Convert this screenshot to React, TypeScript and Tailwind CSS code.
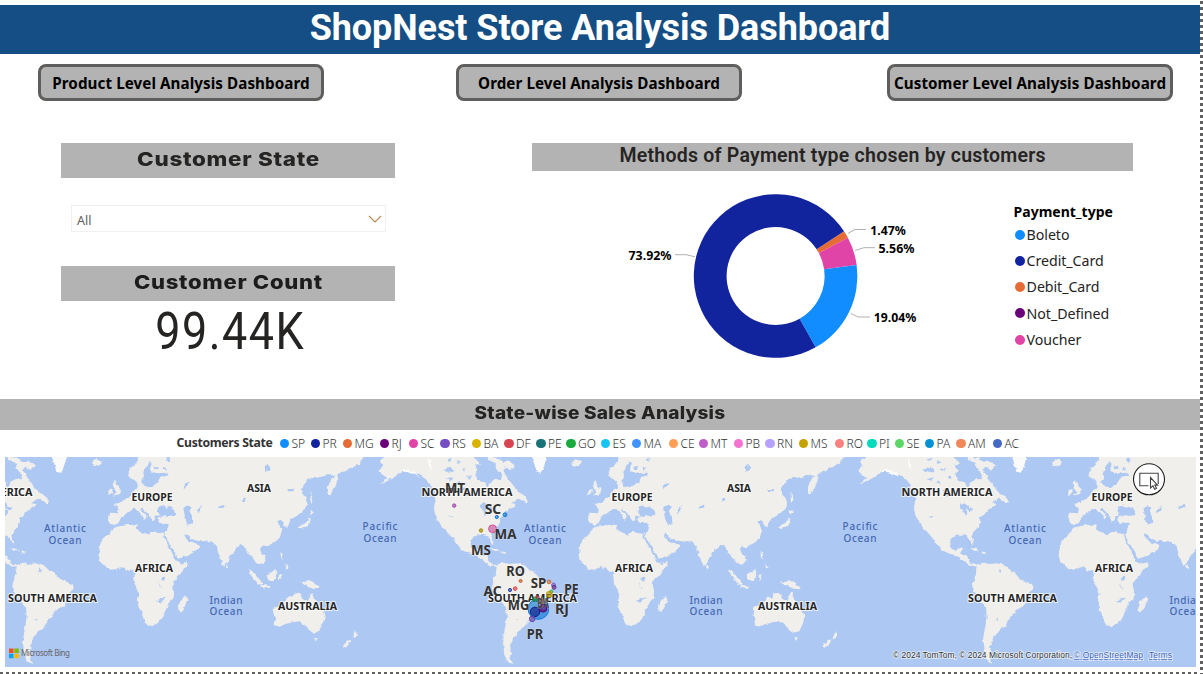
import React from "react";

const land = {
  eurasia:
    "M326 222L330 218 354 220 356 208 350 198 340 192 352 190 362 188 372 180 386 170 394 160 400 150 410 146 414 138 410 126 400 118 390 112 386 98 392 84 404 74 414 60 422 40 1100 40 1094 52 1082 60 1080 72 1066 78 1050 84 1036 94 1020 98 1012 104 1014 118 1006 140 990 166 984 160 984 140 992 120 1006 106 980 106 960 112 926 116 916 128 902 150 906 160 916 172 922 190 916 208 890 228 870 238 866 252 862 262 854 258 850 246 842 240 832 244 842 262 845 274 840 292 828 304 810 314 800 322 786 318 780 326 784 338 794 348 797 362 790 372 778 374 768 368 760 356 748 344 740 330 730 318 722 312 712 320 698 338 690 350 680 368 672 378 666 370 660 352 654 336 650 318 640 312 634 304 610 304 590 302 572 296 564 286 556 280 552 286 562 300 568 308 584 308 598 316 596 324 582 336 566 346 548 352 534 356 526 340 512 316 496 292 494 282 500 276 504 262 506 250 500 248 480 250 472 240 474 232 484 230 478 226 466 228 464 240 458 244 450 232 440 218 428 206 420 208 432 218 440 230 434 240 428 228 418 216 408 206 398 208 388 216 374 222 362 236 356 248 344 254 330 252 324 238Z",
  africa:
    "M346 262L372 256 400 254 410 256 408 268 416 274 430 278 445 284 450 276 462 276 478 280 492 282 490 290 500 308 512 330 522 350 530 366 545 372 563 366 562 376 550 392 535 408 520 424 518 436 522 450 521 474 505 490 500 505 494 520 485 538 470 552 455 558 440 556 434 548 428 528 416 500 413 485 418 462 412 444 402 430 400 412 404 398 396 392 386 392 376 384 362 382 344 388 328 390 314 376 300 362 296 346 298 332 300 315 308 298 322 288 332 274Z",
  northAmerica:
    "M1135 94L1148 78 1140 64 1154 54 1162 40 1424 40 1420 51 1430 60 1440 70 1426 78 1432 90 1446 98 1450 108 1466 116 1504 118 1506 102 1492 90 1506 90 1518 102 1524 118 1535 130 1545 144 1555 156 1572 166 1584 184 1580 190 1560 176 1550 178 1534 190 1550 192 1542 202 1526 208 1512 224 1500 232 1500 246 1492 264 1480 276 1474 290 1480 306 1479 318 1472 302 1462 288 1440 284 1422 290 1410 304 1414 322 1426 334 1434 326 1450 322 1446 332 1440 340 1450 346 1462 348 1466 362 1480 374 1490 374 1486 380 1470 376 1450 362 1430 348 1405 340 1385 330 1370 310 1354 290 1344 278 1332 266 1322 254 1306 226 1302 200 1306 180 1304 160 1290 132 1276 116 1260 106 1240 96 1220 92 1200 98 1188 108 1164 122 1136 134 1162 114 1150 106Z",
  southAmerica:
    "M1490 374L1510 368 1530 372 1550 370 1572 374 1590 390 1604 398 1620 416 1640 426 1658 432 1660 444 1650 458 1640 470 1636 490 1628 500 1608 510 1596 526 1584 544 1574 560 1558 572 1550 582 1540 592 1536 604 1530 620 1534 638 1528 652 1540 672 1525 666 1514 650 1510 620 1510 590 1516 560 1520 530 1518 500 1500 482 1486 460 1476 442 1482 418 1488 400Z",
  australia:
    "M818 510L820 500 840 496 855 484 865 470 878 474 880 462 896 458 906 464 904 474 918 484 926 480 928 462 934 456 942 478 956 492 968 512 974 530 968 552 958 574 938 578 924 568 916 556 900 544 880 546 856 552 838 560 824 556 826 540Z",
  islands:
    "M558 466L562 480 554 500 546 516 536 512 534 498 540 484 550 478ZM940 592L954 592 948 602ZM1064 572L1073 582 1066 596 1058 594 1062 586ZM1054 598L1050 610 1036 623 1028 618 1042 604ZM900 424L916 426 926 420 944 428 958 440 962 447 936 446 924 440 912 434ZM800 404L816 396 826 386 832 396 826 412 818 424 804 420ZM744 386L760 398 776 416 788 432 780 434 764 420 750 402ZM782 434L808 438 806 444 782 440ZM836 404L848 402 842 408 848 420 842 414 838 424ZM842 332L850 346 847 360 842 348ZM856 370L866 382 858 386ZM926 232L931 246 924 258 906 264 890 264 906 254 920 246ZM928 210L942 216 932 226ZM932 156L937 170 936 190 932 182ZM680 372L687 380 683 388 678 382ZM346 120L354 138 364 152 360 162 338 167 350 156 342 146 338 132ZM326 150L338 147 336 160 324 165ZM276 66L292 58 306 66 296 77 280 78ZM1470 324L1488 326 1500 334 1482 332ZM1506 334L1520 338 1514 342 1504 340ZM1462 40L1478 52 1496 54 1508 66 1528 62 1546 78 1532 90 1516 80 1504 94 1490 86 1486 68 1464 60Z",
};

const waters =
  "M472 214L476 200 490 196 500 204 510 200 524 212 526 224 510 228 496 226 484 230ZM550 204L562 196 576 200 570 212 576 232 577 250 564 254 556 238ZM446 142L430 136 424 124 432 112 430 96 440 76 450 62 456 70 450 84 452 94 470 100 500 98 506 106 484 110 478 122 462 136ZM460 80L474 78 476 86 464 88ZM488 80L498 84 496 92 490 90ZM504 52L512 58 506 66 498 58ZM794 80L802 72 812 84 806 94 800 88 796 96ZM548 138L562 126 566 132 552 148ZM590 212L606 196 600 212 592 220ZM654 200L672 194 674 202 658 206ZM726 176L734 170 736 184 728 186ZM758 152L780 134 786 138 766 158ZM862 148L882 146 880 154 864 154ZM486 412L496 410 494 422 484 420ZM476 424L482 440 488 446 484 446 478 436ZM468 482L484 476 500 472 480 488ZM1426 102L1440 80 1454 76 1470 86 1486 94 1496 106 1480 120 1470 132 1462 146 1456 128 1434 122ZM1440 194L1456 190 1466 200 1478 204 1472 214 1456 204 1462 216 1454 230 1450 210 1440 202ZM1346 230L1360 228 1354 234ZM1330 90L1350 80 1364 92 1346 98ZM1340 118L1360 112 1354 124ZM1366 130L1378 124 1382 132ZM1390 146L1400 142 1408 164 1402 172ZM1368 60L1386 66 1372 72ZM1340 58L1358 54 1350 66ZM1556 384L1562 390 1564 398 1558 396ZM1546 538L1554 538 1550 542ZM900 500L910 498 906 503ZM1378 88L1398 84 1390 94ZM1400 110L1416 106 1412 118Z";

const tiles = [-480, 0, 480, 960];

const continents: [string, number, number, number][] = [
  ["EUROPE", 152, 501, 41],
  ["ASIA", 259, 492, 24],
  ["AFRICA", 154, 572.3, 38],
  ["SOUTH AMERICA", 532.5, 602.3, 89],
  ["NORTH AMERICA", 467, 495.5, 91],
  ["AUSTRALIA", 307.5, 610, 59],
];
const oceans: [string, number, number, number][] = [
  ["Atlantic", 545, 532, 42],
  ["Ocean", 545, 543.5, 33],
  ["Indian", 226, 603.5, 33],
  ["Ocean", 226, 614.7, 33],
  ["Pacific", 380, 530, 35],
  ["Ocean", 380, 541.5, 33],
];
const bubbles: [number, number, number, string][] = [
  [454.2, 505.6, 1.7, "#c04fc8"],
  [496.8, 517, 1.6, "#118dff"],
  [505, 514.7, 1.9, "#118dff"],
  [481, 530.5, 1.7, "#c4a200"],
  [492.5, 528.8, 3.9, "#f062b8"],
  [520.6, 580.9, 1.5, "#e66c37"],
  [515.2, 588.6, 1.8, "#ff5050"],
  [510, 590, 1.6, "#3050c8"],
  [549, 581.9, 1.9, "#ef8545"],
  [553.5, 585, 2, "#a070f0"],
  [554, 587.3, 2, "#7c429c"],
  [551.2, 591.5, 1.6, "#4bd060"],
  [549.3, 594.3, 2.9, "#d9b300"],
  [538.4, 609, 10.3, "#118dff"],
  [535, 599.2, 2.1, "#1aab40"],
  [541.5, 601.5, 2.8, "#b96442"],
  [537.2, 597, 1.5, "#d64550"],
  [535, 611.9, 4.7, "#12239e"],
  [543, 608.2, 3.9, "#6b007b"],
  [532.2, 618.8, 2.8, "#744ec2"],
];
const stateLabels: [string, number, number, number][] = [
  ["MT", 455, 493, 20],
  ["SC", 493, 514.3, 16.5],
  ["MA", 505.5, 539, 22],
  ["MS", 481, 555.3, 20],
  ["RO", 515.5, 576, 18.5],
  ["SP", 538.5, 588.2, 15.5],
  ["PE", 571.5, 594.2, 14.5],
  ["AC", 492.5, 596.3, 18],
  ["MG", 518.5, 610.2, 21.5],
  ["BA", 543, 607.5, 12],
  ["RJ", 562, 614, 14],
  ["PR", 535, 639.2, 16.5],
];

const states: [string, string][] = [
  ["SP", "bg-[#118dff]"],
  ["PR", "bg-[#12239e]"],
  ["MG", "bg-[#e66c37]"],
  ["RJ", "bg-[#6b007b]"],
  ["SC", "bg-[#e044a7]"],
  ["RS", "bg-[#744ec2]"],
  ["BA", "bg-[#d9b300]"],
  ["DF", "bg-[#d64550]"],
  ["PE", "bg-[#197278]"],
  ["GO", "bg-[#1aab40]"],
  ["ES", "bg-[#15c6f4]"],
  ["MA", "bg-[#4092ff]"],
  ["CE", "bg-[#ffa058]"],
  ["MT", "bg-[#be5dc9]"],
  ["PB", "bg-[#f472d0]"],
  ["RN", "bg-[#b5a1ff]"],
  ["MS", "bg-[#c4a200]"],
  ["RO", "bg-[#ff8080]"],
  ["PI", "bg-[#00dbbc]"],
  ["SE", "bg-[#5bd667]"],
  ["PA", "bg-[#0091d5]"],
  ["AM", "bg-[#f0885a]"],
  ["AC", "bg-[#4668c5]"],
];

const payments: [string, string][] = [
  ["Boleto", "bg-[#118dff]"],
  ["Credit_Card", "bg-[#12239e]"],
  ["Debit_Card", "bg-[#e66c37]"],
  ["Not_Defined", "bg-[#6b007b]"],
  ["Voucher", "bg-[#e044a7]"],
];

const slices: [number, number, string][] = [
  [56.8, 62.1, "#e66c37"],
  [62.1, 82.2, "#e044a7"],
  [82.2, 150.7, "#118dff"],
  [150.7, 416.8, "#12239e"],
];

function ring(a: number, b: number) {
  const cx = 175.6;
  const cy = 96;
  const p = (r: number, t: number) =>
    `${cx + r * Math.sin((t * Math.PI) / 180)} ${cy - r * Math.cos((t * Math.PI) / 180)}`;
  const big = b - a > 180 ? 1 : 0;
  return `M${p(81.8, a)}A81.8 81.8 0 ${big} 1 ${p(81.8, b)}L${p(49, b)}A49 49 0 ${big} 0 ${p(49, a)}Z`;
}

function NavButton({ children }: { children: React.ReactNode }) {
  return (
    <button className="flex h-[37px] w-[286px] items-center justify-center whitespace-nowrap rounded-[8px] border-[3px] border-[#605e5c] bg-[#b3b3b3] pt-0.5 font-['Noto_Sans',sans-serif] text-[15.2px] font-bold tracking-[0.07px] text-black">
      {children}
    </button>
  );
}

function Donut() {
  const labels: [string, number, number, number][] = [
    ["73.92%", 28.5, 79.7, 43],
    ["1.47%", 270.2, 54.7, 35.5],
    ["5.56%", 278.5, 72.8, 36],
    ["19.04%", 273.7, 142, 42.5],
  ];
  return (
    <svg className="h-[190px] w-[330px]" viewBox="0 0 330 190">
      {slices.map(([a, b, c]) => (
        <path key={a} d={ring(a, b)} fill={c} />
      ))}
      <g fill="none" stroke="#b3b0ad">
        <path d="M75 74.7H86L95 76.8" />
        <path d="M248 53.5L255 49.5H266" />
        <path d="M255 70.5L264 67.7H275" />
        <path d="M251 133.5L258 137H270" />
      </g>
      <g className="font-['Noto_Sans',sans-serif] text-[13px] font-bold">
        {labels.map(([t, x, y, w]) => (
          <text key={t} x={x} y={y} textLength={w} lengthAdjust="spacingAndGlyphs">
            {t}
          </text>
        ))}
      </g>
    </svg>
  );
}

function WorldMap() {
  return (
    <svg className="block h-[210px] w-[1191px] bg-[#adc8f3]" viewBox="5 457 1191 210">
      <defs>
        <filter id="coast" x="-5%" y="-5%" width="110%" height="110%">
          <feTurbulence type="fractalNoise" baseFrequency="0.22" numOctaves="2" seed="4" />
          <feDisplacementMap in="SourceGraphic" scale="3.8" xChannelSelector="R" yChannelSelector="G" />
        </filter>
        <g id="world" transform="translate(0 440) scale(.33333)">
          <g fill="#f0efeb">
            <path d={land.eurasia} />
            <path d={land.africa} />
            <path d={land.northAmerica} />
            <path d={land.southAmerica} />
            <path d={land.australia} />
            <path d={land.islands} />
          </g>
          <path d="M1592 40H1646L1638 60 1630 84 1622 98 1610 96 1604 76Z" fill="#fafafa" />
          <path d="M1284 52L1292 64 1294 90 1286 80ZM1200 92L1220 88 1250 98 1256 110 1230 98Z" fill="#fcfcfc" />
          <path d={waters} fill="#adc8f3" />
        </g>
      </defs>
      <g filter="url(#coast)">
        {tiles.map((dx) => (
          <use key={dx} href="#world" x={dx} />
        ))}
      </g>
      {tiles.map((dx) => (
        <g key={dx} transform={`translate(${dx} 0)`} textAnchor="middle" className="font-['Noto_Sans',sans-serif]">
          <g fill="#252525" stroke="#ffffff" strokeOpacity=".75" strokeWidth="2" paintOrder="stroke" className="text-[11px] font-bold">
            {continents
              .filter(([, x, , w]) => x + dx + w / 2 > 5 && x + dx - w / 2 < 1196)
              .map(([t, x, y, w]) => (
                <text key={t} x={x} y={y} textLength={w} lengthAdjust="spacingAndGlyphs">
                  {t}
                </text>
              ))}
          </g>
          <g fill="#4769b4" className="text-[10px] font-medium">
            {oceans
              .filter(([, x, , w]) => x + dx + w / 2 > 5 && x + dx - w / 2 < 1196)
              .map(([t, x, y, w]) => (
                <text key={t + x} x={x} y={y} textLength={w}>
                  {t}
                </text>
              ))}
          </g>
        </g>
      ))}
      {bubbles.map(([x, y, r, c]) => (
        <circle key={`${x}-${y}`} cx={x} cy={y} r={r} fill={c} fillOpacity=".65" stroke={c} strokeWidth="1" className="brightness-85" />
      ))}
      <g textAnchor="middle" fill="#333" className="font-['Noto_Sans',sans-serif] text-[14px] font-bold">
        {stateLabels.map(([t, x, y, w]) => (
          <text key={t} x={x} y={y} textLength={w} lengthAdjust="spacingAndGlyphs" fillOpacity={t === "BA" ? 0.7 : 1} stroke="#fff" strokeOpacity=".35" strokeWidth="1" paintOrder="stroke">
            {t}
          </text>
        ))}
      </g>
      <path d="M9 648.5h4.5v4.5H9z" fill="#f25022" />
      <path d="M14.3 648.5h4.5v4.5h-4.5z" fill="#7fba00" />
      <path d="M9 653.7h4.5v4.5H9z" fill="#00a4ef" />
      <path d="M14.3 653.7h4.5v4.5h-4.5z" fill="#ffb900" />
      <text x="21" y="656.3" textLength="49" fill="#666" className="font-['Noto_Sans',sans-serif] text-[8px]">
        Microsoft Bing
      </text>
      <g stroke="#fff" strokeOpacity=".7" strokeWidth="1.5" paintOrder="stroke" className="font-['Liberation_Sans',sans-serif] text-[8.5px]">
        <text x="893" y="658.3" textLength="179" fill="#333">
          © 2024 TomTom, © 2024 Microsoft Corporation,
        </text>
        <text x="1074" y="658.3" textLength="69" fill="#3a62b8" className="underline">
          © OpenStreetMap
        </text>
        <text x="1149" y="658.3" textLength="23" fill="#3a62b8" className="underline">
          Terms
        </text>
      </g>
      <circle cx="1149" cy="479.3" r="15.5" fill="#fff" stroke="#1b1b1b" strokeWidth="1.1" />
      <path d="M1148.5 485.8H1139.8V473.3H1158.2V484" fill="none" stroke="#444" strokeWidth="1.1" />
      <path d="M1150.5 477.5V488l2.4-2.2 1.8 3.4 1.8-.9-1.7-3.2h2.8Z" fill="#fff" stroke="#444" strokeWidth="1.1" />
    </svg>
  );
}

export default function App() {
  return (
    <div className="flex h-[674px] w-[1203px] overflow-hidden bg-white">
      <div className="flex w-[1200px] shrink-0 flex-col">
        <header className="mt-[5px] flex h-[49px] shrink-0 justify-center bg-[#144e84]">
          <h1 className="whitespace-nowrap font-[Roboto,sans-serif] text-[36px] font-bold leading-[46px] tracking-[-0.08px] text-white">
            ShopNest Store Analysis Dashboard
          </h1>
        </header>
        <nav className="mt-[9.5px] flex h-[37px] shrink-0 justify-between pl-[38px] pr-[27px]">
          <NavButton>Product Level Analysis Dashboard</NavButton>
          <div className="ml-[-13px]">
            <NavButton>Order Level Analysis Dashboard</NavButton>
          </div>
          <NavButton>Customer Level Analysis Dashboard</NavButton>
        </nav>
        <main className="mt-[42.5px] flex h-[256px] shrink-0 pl-[61.4px]">
          <section className="flex w-[334px] shrink-0 flex-col">
            <h2 className="h-[35px] whitespace-nowrap bg-[#b3b3b3] text-center font-[Inter,sans-serif] text-[19px] font-extrabold leading-[33px] tracking-[0.6px] text-[#252423]">
              <span className="inline-block scale-x-[1.18]">Customer State</span>
            </h2>
            <div className="ml-[9.6px] mt-[27px] flex h-[27px] w-[315px] items-center justify-between border border-[#f0f0f0] pl-[5px] pr-[3px] pt-0.5 font-['Noto_Sans',sans-serif] text-[12.5px] text-[#605e5c]">
              <span className="pt-1">All</span>
              <svg className="mb-0.5 h-[10px] w-[14px]" viewBox="0 0 14 10">
                <path d="M1 2L7 8L13 2" fill="none" stroke="#b48a54" strokeWidth="1.1" />
              </svg>
            </div>
            <h2 className="mt-[34px] h-[35px] whitespace-nowrap bg-[#b3b3b3] text-center font-[Inter,sans-serif] text-[19px] font-extrabold leading-[33px] tracking-[0.6px] text-[#1c1c1c]">
              <span className="inline-block scale-x-[1.16]">Customer Count</span>
            </h2>
            <p className="pl-[4px] text-center font-[Roboto,sans-serif] text-[51px] leading-[61px] tracking-[1.7px] text-[#252423]">
              <span className="inline-block scale-x-[0.88]">99.44K</span>
            </p>
          </section>
          <section className="ml-[137px] w-[600.5px]">
            <h2 className="h-[28px] whitespace-nowrap bg-[#b3b3b3] text-center font-[Roboto,sans-serif] text-[19.5px] font-semibold leading-[26px] tracking-[0.24px] text-[#252423]">
              Methods of Payment type chosen by customers
            </h2>
            <div className="flex pl-[67.2px] pt-[9px]">
              <Donut />
              <div className="ml-[84px] mt-[22px] font-['Noto_Sans',sans-serif] text-[14px] text-black">
                <h3 className="h-[19.5px] font-bold leading-[19px]">Payment_type</h3>
                <ul>
                  {payments.map(([name, color]) => (
                    <li key={name} className="flex h-[26.25px] items-center gap-[2px] text-[14.2px] tracking-[-0.05px] text-[#252423]">
                      <span className={`ml-[1px] size-[10px] rounded-full ${color}`} />
                      {name}
                    </li>
                  ))}
                </ul>
              </div>
            </div>
          </section>
        </main>
        <h2 className="h-[31px] shrink-0 bg-[#b3b3b3] text-center font-[Inter,sans-serif] text-[17px] font-extrabold leading-[28px] tracking-[0.2px] text-[#252423]">
          <span className="inline-block scale-x-[1.12]">State-wise Sales Analysis</span>
        </h2>
        <div className="flex h-[27px] shrink-0 items-center pl-[176.5px] font-['Noto_Sans',sans-serif] text-[12px] text-[#333]">
          <h3 className="w-[103px] whitespace-nowrap text-[12.2px] font-bold tracking-[-0.3px]">Customers State</h3>
          <ul className="grid grid-cols-[31px_32px_37px_29px_31.5px_31.5px_32.5px_32px_30px_34.5px_31px_37px_30px_35px_31.5px_33.5px_36px_32.5px_27.5px_30px_31.5px_36.5px_32px]">
            {states.map(([name, color]) => (
              <li key={name} className="flex items-center gap-[2.5px] font-light">
                <span className={`size-[9.5px] shrink-0 rounded-full ${color}`} />
                {name}
              </li>
            ))}
          </ul>
        </div>
        <div className="shrink-0 pl-[5px]">
          <WorldMap />
        </div>
        <div className="mt-[5px] h-[2px] shrink-0 bg-[repeating-linear-gradient(90deg,#606060_0_3px,#fff_3px_6px)]" />
      </div>
      <div className="w-[3px] shrink-0 bg-[repeating-linear-gradient(180deg,#fff_0_1px,#606060_1px_4px,#fff_4px_6px)]" />
    </div>
  );
}
